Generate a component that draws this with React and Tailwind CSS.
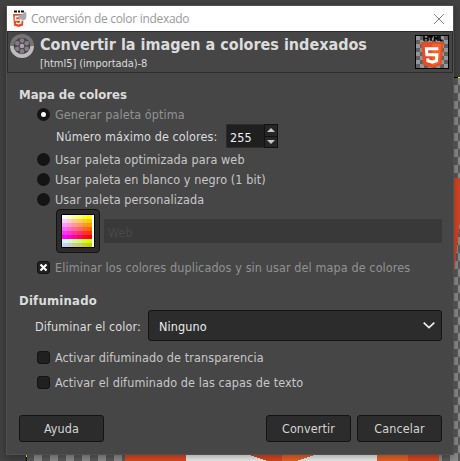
import React from "react";

function Backdrop() {
  return (
    <svg className="absolute inset-0" width="460" height="461" shapeRendering="crispEdges">
      <defs>
        <pattern id="chk" x="2" y="5" width="16" height="16" patternUnits="userSpaceOnUse">
          <rect width="16" height="16" fill="#5a5a5a" />
          <rect width="8" height="8" fill="#8c8c8c" />
          <rect x="8" y="8" width="8" height="8" fill="#8c8c8c" />
        </pattern>
      </defs>
      <rect width="460" height="461" fill="#424242" />
      <rect x="26" y="78" width="434" height="383" fill="url(#chk)" />
      <path d="M26 77.5H460M26.5 77V461" stroke="#000" />
      <path d="M458 77.5H460M26.5 453V457" stroke="#ff0" />
      <path d="M454 178h6v43l-6 54z" fill="#d34523" />
      <path d="M125 454h61v7h-61z" fill="#dc4a25" />
      <path d="M186 454h192v7H186z" fill="#eeeeee" />
      <path d="M246 454h36v9h-8z" fill="#d84824" />
      <path d="M282 454h36l-28 9h-8z" fill="#e86428" />
      <path d="M377 454h31v7h-31z" fill="#e86428" />
      <path d="M408 454h31v7h-31z" fill="#d84824" />
    </svg>
  );
}

function Html5({ w, h, checker }) {
  return (
    <svg width={w} height={h} viewBox="0 0 32 32">
      {checker && (
        <>
          <defs>
            <pattern id="thumb" width="8" height="8" patternUnits="userSpaceOnUse">
              <rect width="8" height="8" fill="#606060" />
              <path d="M0 0h4v4H0zM4 4h4v4H4z" fill="#969696" />
            </pattern>
          </defs>
          <rect width="32" height="32" fill="url(#thumb)" />
        </>
      )}
      <path d="M8 0V5M12 0V5M8 2.500H12M13 .800h4M15 0V5M18.500 5V.500l1.700 2.500L22 .500V5M24 0V4.300H26.500" stroke="#000" strokeWidth="1.500" fill="none" />
      <path d="M5 6h22.500l-2.100 23L16.200 32 7.100 29z" fill="#e44d26" />
      <path d="M16.200 8h9.100l-1.700 19.500-7.400 2.200z" fill="#f16529" />
      <path d="M22.300 12.800H10.400L10.900 18.800h10l-.5 6-4.200 1.300-4.300-1.300-.2-2.500" stroke="#fff" strokeWidth="3" fill="none" />
    </svg>
  );
}

function TitleIcon() {
  return (
    <svg width="16" height="18" viewBox="0 0 16 18">
      <path d="M2 1.500h3M6 1.500h2M9 1.500h3" stroke="#111" strokeWidth="2" />
      <path d="M1 4h11l-1 11.500-4.500 1.500L2 15.500z" fill="#e44d26" />
      <path d="M9.500 6.500h-6v3.500h5.500l-.3 3-2.200.8-2.500-.8" stroke="#fff" strokeWidth="1.400" fill="none" />
      <path d="M6 4.500c2 1 4 .5 7.500-3l1 2.500-.5 5-3 1.500-4-1z" fill="#aaa" />
      <path d="M8 9.500l5 2" stroke="#eee" />
    </svg>
  );
}

function IndexedIcon() {
  const dots = [[0, -5.4], [4.7, -2.7], [4.7, 2.7], [0, 5.4], [-4.7, 2.7], [-4.7, -2.7], [0, 0]];
  return (
    <svg width="24" height="24" viewBox="-12 -12 24 24">
      <path d="M-12 0a12 12 0 0 1 24 0z" fill="#747474" />
      <path d="M-12 0a12 12 0 0 0 24 0z" fill="#bcbcbc" />
      <circle r="8.300" fill="#4a454a" />
      {dots.map(([x, y], i) => (
        <circle key={i} cx={x} cy={y} r="2.300" fill={i === 6 ? "#aaa5aa" : "#857c87"} />
      ))}
    </svg>
  );
}

const PALETTE = [
  "#ffffff #ffffcc #ffff99 #ffff66 #ffff33 #ffff00",
  "#ffccff #ffcccc #ffcc99 #ffcc66 #ffcc33 #ffcc00",
  "#ff99ff #ff99cc #ff9999 #ff9966 #ff9933 #ff9900",
  "#ff66ff #ff66cc #ff6699 #ff6666 #ff6633 #ff6600",
  "#ff33ff #ff33cc #ff3399 #ff3366 #ff3333 #ff3300",
  "#ff00ff #ff00cc #ff0099 #ff0066 #ff0033 #ff0000",
  "#ccffff #ccffcc #ccff99 #ccff66 #ccff33 #ccff00",
  "#ccccff #cccccc #cccc99 #cccc66 #cccc33 #cccc00",
].map((row) => row.split(" "));

function PaletteSwatch() {
  return (
    <svg width="34" height="34" shapeRendering="crispEdges">
      <rect width="34" height="34" fill="#000" />
      <rect x="1" y="1" width="32" height="32" fill="#fff" />
      {PALETTE.map((row, y) =>
        row.map((c, x) => <rect key={c} x={1 + x * 5} y={1 + y * 4} width="5" height="4" fill={c} />)
      )}
    </svg>
  );
}

function Radio({ label, checked, labelClass = "text-[#c8c8c8]" }) {
  return (
    <div className="flex h-5 items-center pl-[18px]">
      <span className="flex size-[13px] shrink-0 items-center justify-center rounded-full bg-[#141414]">
        {checked && <span className="size-[5px] rounded-full bg-white" />}
      </span>
      <span className={"ml-[5px] pt-px " + labelClass}>{label}</span>
    </div>
  );
}

function Check({ label, checked, labelClass = "text-[#c8c8c8]" }) {
  return (
    <div className="flex h-5 items-center pl-[18px]">
      <span className="flex size-[13px] shrink-0 items-center justify-center rounded-[3px] border border-[#131313] bg-[#202020]">
        {checked && (
          <svg width="9" height="9" viewBox="0 0 9 9">
            <path d="M1.500 1.500l6 6M7.500 1.500l-6 6" stroke="#fff" strokeWidth="2.200" />
          </svg>
        )}
      </span>
      <span className={"ml-[5px] pt-px " + labelClass}>{label}</span>
    </div>
  );
}

function Button({ children, className = "" }) {
  return (
    <button className={"h-[27px] w-[85px] rounded-[3px] border border-[#131313] bg-[#2c2c2c] pt-px text-[#d4d4d4] " + className}>
      {children}
    </button>
  );
}

function Arrow({ down }) {
  return (
    <svg width="8" height="4" viewBox="0 0 8 4">
      <path d={down ? "M0 0h8L4 4z" : "M0 4h8L4 0z"} fill="#c8c8c8" />
    </svg>
  );
}

export default function App() {
  return (
    <div className="relative h-[461px] w-[460px] overflow-hidden">
      <Backdrop />
      <div className="relative flex h-full flex-col pt-[5px] pb-[6px] pl-[6px]">
        <div className="flex h-[450px] w-[448px] flex-col border border-[#505050] bg-[#464646] font-['DejaVu_Sans_Condensed','DejaVu_Sans',sans-serif] text-[12.5px] leading-5 tracking-[0.1px] whitespace-nowrap text-[#dcdcdc] shadow-[0_2px_8px_rgba(0,0,0,0.35)]">
          <div className="flex h-[25px] shrink-0 items-center bg-white pr-[8px] pl-[5px] text-[#999]">
            <TitleIcon />
            <span className="ml-[3px] flex-1 font-['Open_Sans',sans-serif] text-[12px] tracking-[-0.3px]">Conversión de color indexado</span>
            <svg width="12" height="12" viewBox="0 0 12 12">
              <path d="M1 1l10 10M11 1L1 11" stroke="#888" />
            </svg>
          </div>
          <div className="flex h-[42px] shrink-0 border border-[#2c2c2c] pt-[2px] pr-[3px] pl-[2px]">
            <IndexedIcon />
            <div className="ml-[6px] flex-1">
              <div className="h-[20px] text-[16px] leading-[22px] font-bold tracking-normal">Convertir la imagen a colores indexados</div>
              <div className="text-[11px] leading-[19px] tracking-[-0.05px]">[html5] (importada)-8</div>
            </div>
            <div className="mt-px size-[34px] border border-black">
              <Html5 w={32} h={32} checker />
            </div>
          </div>
          <div className="flex flex-1 flex-col pr-[11px] pl-[12px]">
            <div className="mt-[12px] h-[19px] text-[13px] font-bold tracking-normal">Mapa de colores</div>
            <Radio label="Generar paleta óptima" checked labelClass="text-[#929292]" />
            <div className="flex h-[24px] pl-[37px]">
              <span className="w-[170px] leading-[25px]">Número máximo de colores:</span>
              <div className="flex w-[52px] border border-[#2b2b2b] bg-[#1f1f1f]">
                <span className="flex-1 pl-[3px] leading-[25px] text-[#f0f0f0]">255</span>
                <div className="-my-px -mr-px flex w-[14px] flex-col border border-[#111] bg-[#262626]">
                  <div className="flex flex-1 items-center justify-center border-b border-[#111]"><Arrow /></div>
                  <div className="flex flex-1 items-center justify-center"><Arrow down /></div>
                </div>
              </div>
            </div>
            <div className="mt-px">
              <Radio label="Usar paleta optimizada para web" />
              <Radio label="Usar paleta en blanco y negro (1 bit)" />
              <Radio label="Usar paleta personalizada" />
            </div>
            <div className="flex h-[44px] items-center gap-[4px] pl-[37px]">
              <div className="flex size-[44px] shrink-0 items-center justify-center rounded-[4px] border border-[#131313] bg-[#2c2c2c]">
                <PaletteSwatch />
              </div>
              <div className="h-[24px] flex-1 bg-[#393939] pl-[4px] leading-[27px] text-[#484848]">Web</div>
            </div>
            <div className="mt-[4px]">
              <Check label="Eliminar los colores duplicados y sin usar del mapa de colores" checked labelClass="text-[#929292]" />
            </div>
            <div className="mt-[14px] h-[19px] text-[13px] font-bold tracking-[0.2px]">Difuminado</div>
            <div className="flex h-[31px] items-center pl-[16px]">
              <span className="w-[113px] pt-[2px]">Difuminar el color:</span>
              <div className="flex h-[31px] flex-1 items-center rounded-[3px] border border-[#131313] bg-[#2c2c2c] pr-[6px] pl-[10px] text-[#ececec]">
                <span className="flex-1 pt-[2px]">Ninguno</span>
                <svg width="12" height="7" viewBox="0 0 12 7">
                  <path d="M.700 .700L6 5.600L11.300 .700" stroke="#eee" strokeWidth="1.700" fill="none" />
                </svg>
              </div>
            </div>
            <div className="mt-[6px] flex flex-col gap-[5px]">
              <Check label="Activar difuminado de transparencia" />
              <Check label="Activar el difuminado de las capas de texto" />
            </div>
            <div className="mt-auto mb-[12px] flex gap-[6px]">
              <Button className="mr-auto">Ayuda</Button>
              <Button>Convertir</Button>
              <Button>Cancelar</Button>
            </div>
          </div>
        </div>
      </div>
    </div>
  );
}
